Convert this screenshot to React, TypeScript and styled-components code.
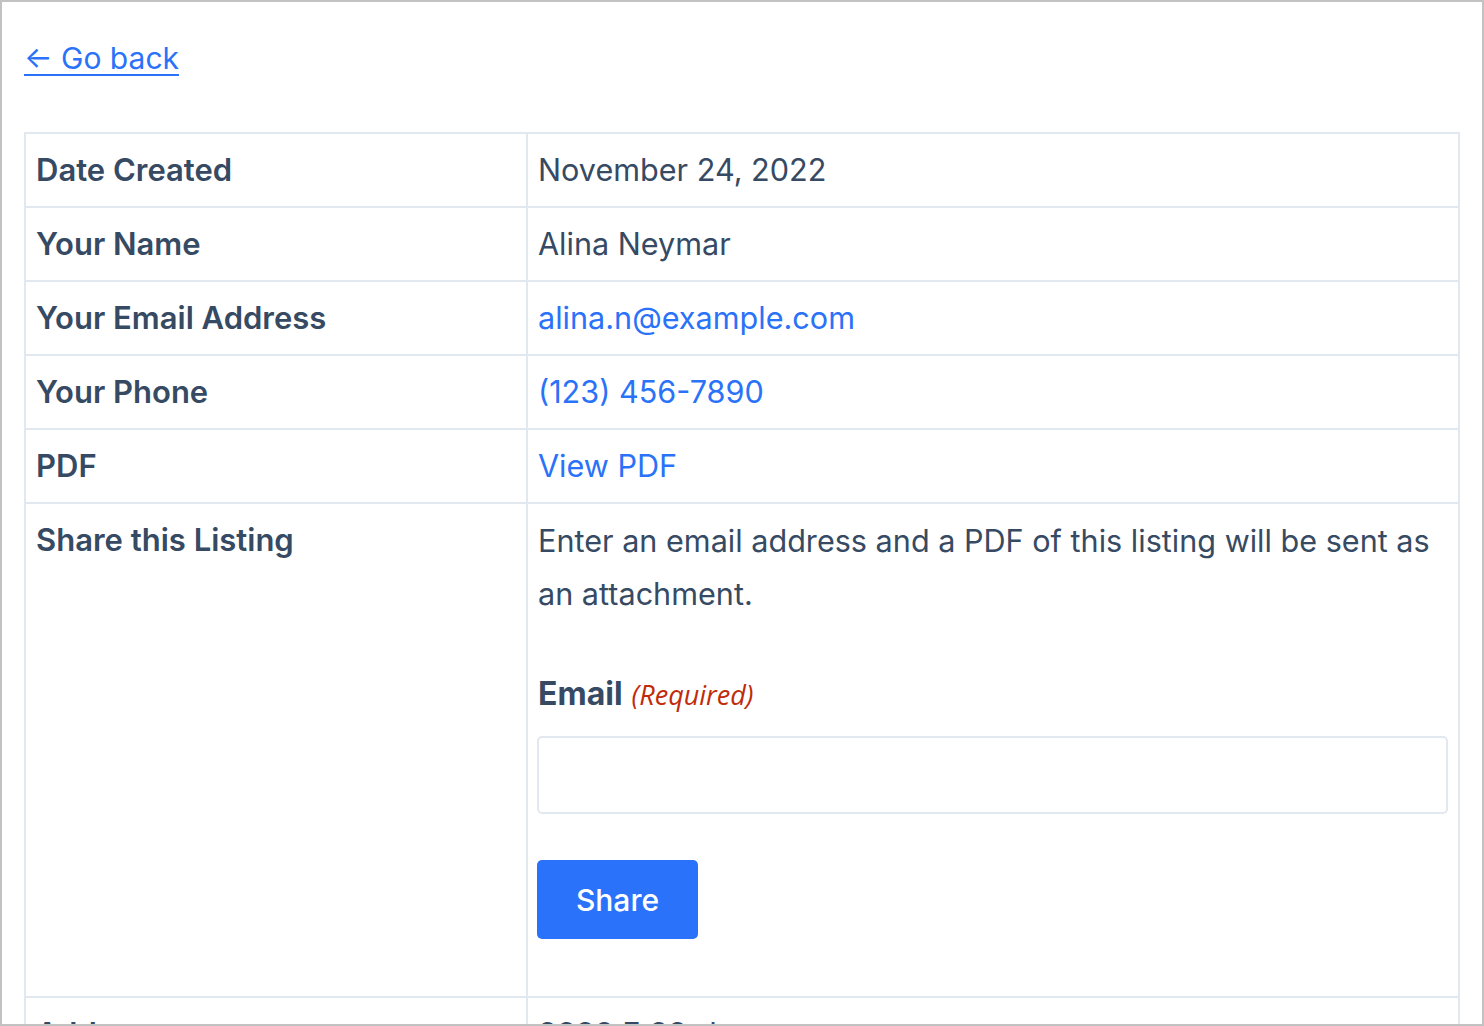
import React from "react";
import styled, { createGlobalStyle } from "styled-components";

const Global = createGlobalStyle`
  html, body { margin: 0; padding: 0; background: #fff; }
  * { box-sizing: border-box; }
`;

const Frame = styled.div`
  width: 1484px;
  height: 1026px;
  border: 2px solid #c2c2c2;
  overflow: hidden;
  padding: 34px 22px 0 22px;
  font-family: Inter, "Noto Sans", sans-serif;
  color: #364a63;
`;

const BackLink = styled.a`
  display: inline-block;
  font-size: 30px;
  line-height: 44px;
  color: #2a72f8;
  text-decoration: underline;
  text-decoration-thickness: 2px;
  text-underline-offset: 5px;
  margin-bottom: 52px;
`;

const Table = styled.table`
  width: 1436px;
  border-collapse: collapse;
  border: 2px solid #e2e8f0;
`;

const Row = styled.tr`
  border-bottom: 2px solid #e2e8f0;
`;

const Label = styled.th`
  width: 503px;
  text-align: left;
  vertical-align: top;
  font-weight: 600;
  font-size: 31px;
  line-height: 52px;
  padding: 10px 10px;
  border-right: 2px solid #e2e8f0;
  color: #364a63;
`;

const Value = styled.td`
  vertical-align: top;
  font-size: 30.6px;
  line-height: 52px;
  padding: 10px 10px 10px 10px;
  color: #364a63;
`;

const Link = styled.a`
  color: #2a72f8;
  text-decoration: none;
`;

const Para = styled.p`
  margin: 0 0 54px 0;
  font-size: 30.6px;
  line-height: 53px;
`;

const FieldLabel = styled.label`
  display: flex;
  align-items: baseline;
  gap: 9px;
  font-size: 32px;
  line-height: 40px;
  font-weight: 700;
  color: #364a63;
  margin-bottom: 21px;
`;

const Required = styled.span`
  font-family: "Open Sans", Lato, sans-serif;
  font-style: italic;
  font-weight: 400;
  font-size: 27px;
  color: #c02b0a;
`;

const Input = styled.input`
  display: block;
  width: 911px;
  height: 78px;
  border: 2px solid #e2e8f0;
  border-radius: 5px;
  margin: 0 0 46px -1px;
  font-size: 28px;
  padding: 0 16px;
`;

const Button = styled.button`
  display: block;
  width: 161px;
  height: 79px;
  margin: 0 0 47px -1px;
  background: #2b72fb;
  color: #fff;
  border: none;
  border-radius: 5px;
  font-family: Inter, "Noto Sans", sans-serif;
  font-size: 30px;
  font-weight: 500;
`;

const rows: { label: string; value: string; link?: boolean }[] = [
  { label: "Date Created", value: "November 24, 2022" },
  { label: "Your Name", value: "Alina Neymar" },
  { label: "Your Email Address", value: "alina.n@example.com", link: true },
  { label: "Your Phone", value: "(123) 456-7890", link: true },
  { label: "PDF", value: "View PDF", link: true },
];

export default function App() {
  return (
    <>
      <Global />
      <Frame>
        <BackLink href="#">← Go back</BackLink>
        <Table>
          <tbody>
            {rows.map((r) => (
              <Row key={r.label}>
                <Label>{r.label}</Label>
                <Value>
                  {r.link ? <Link href="#">{r.value}</Link> : r.value}
                </Value>
              </Row>
            ))}
            <Row>
              <Label>Share this Listing</Label>
              <Value>
                <Para>
                  Enter an email address and a PDF of this listing will be sent as an attachment.
                </Para>
                <FieldLabel>
                  Email <Required>(Required)</Required>
                </FieldLabel>
                <Input type="email" />
                <Button>Share</Button>
              </Value>
            </Row>
            <Row>
              <Label>Address</Label>
              <Value>3333 E 33rd st</Value>
            </Row>
          </tbody>
        </Table>
      </Frame>
    </>
  );
}
